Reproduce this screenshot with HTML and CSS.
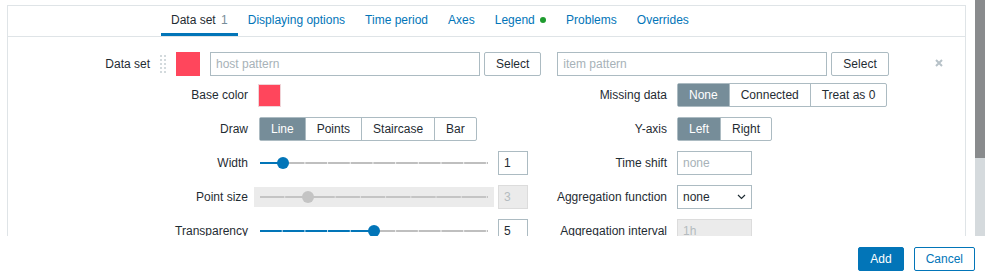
FILE: index.html
```html
<!DOCTYPE html>
<html lang="en">

<head>
    <meta charset="UTF-8">
    <title>Graph widget</title>
    <link rel="stylesheet" href="styles.css">
</head>

<body>
    <div class="dialog">
        <div class="dialog-body">
            <div class="scroll-area">
                <div class="tab-panel">
                    <ul class="tabs">
                        <li class="tab active"><a href="#">Data set <span class="count">1</span></a></li>
                        <li class="tab"><a href="#">Displaying options</a></li>
                        <li class="tab"><a href="#">Time period</a></li>
                        <li class="tab"><a href="#">Axes</a></li>
                        <li class="tab"><a href="#">Legend <span class="dot"></span></a></li>
                        <li class="tab"><a href="#">Problems</a></li>
                        <li class="tab"><a href="#">Overrides</a></li>
                    </ul>

                    <div class="tab-content">
                        <div class="dataset-row">
                            <label class="dataset-label">Data set</label>
                            <span class="drag-handle"></span>
                            <span class="swatch"></span>
                            <input class="text pattern" type="text" placeholder="host pattern">
                            <button class="btn">Select</button>
                            <input class="text pattern item" type="text" placeholder="item pattern">
                            <button class="btn">Select</button>
                            <span class="remove">
                                <svg width="8" height="8" viewBox="0 0 8 8">
                                    <path d="M1 1 L7 7 M7 1 L1 7" stroke="#b7c2c8" stroke-width="2" />
                                </svg>
                            </span>
                        </div>

                        <div class="form-grid">
                            <label class="lbl">Base color</label>
                            <div class="ctl"><span class="swatch small"></span></div>
                            <label class="lbl right">Missing data</label>
                            <div class="ctl">
                                <div class="segmented">
                                    <span class="seg checked">None</span>
                                    <span class="seg">Connected</span>
                                    <span class="seg">Treat as 0</span>
                                </div>
                            </div>

                            <label class="lbl">Draw</label>
                            <div class="ctl">
                                <div class="segmented">
                                    <span class="seg checked">Line</span>
                                    <span class="seg">Points</span>
                                    <span class="seg">Staircase</span>
                                    <span class="seg">Bar</span>
                                </div>
                            </div>
                            <label class="lbl right">Y-axis</label>
                            <div class="ctl">
                                <div class="segmented">
                                    <span class="seg checked">Left</span>
                                    <span class="seg">Right</span>
                                </div>
                            </div>

                            <label class="lbl">Width</label>
                            <div class="ctl">
                                <div class="range">
                                    <div class="track ticks-10" style="--pos: 10%"><span class="thumb"></span></div>
                                </div>
                                <input class="text num" type="text" value="1">
                            </div>
                            <label class="lbl right">Time shift</label>
                            <div class="ctl"><input class="text short" type="text" placeholder="none"></div>

                            <label class="lbl">Point size</label>
                            <div class="ctl">
                                <div class="range disabled">
                                    <div class="track ticks-9" style="--pos: 21%"><span class="thumb"></span></div>
                                </div>
                                <input class="text num" type="text" value="3" disabled>
                            </div>
                            <label class="lbl right">Aggregation function</label>
                            <div class="ctl">
                                <div class="select">
                                    <span>none</span>
                                    <svg width="9" height="6" viewBox="0 0 9 6">
                                        <path d="M1 1 L4.5 4.5 L8 1" fill="none" stroke="#1f2c33" stroke-width="1.2" />
                                    </svg>
                                </div>
                            </div>

                            <label class="lbl">Transparency</label>
                            <div class="ctl">
                                <div class="range">
                                    <div class="track ticks-10" style="--pos: 50%"><span class="thumb"></span></div>
                                </div>
                                <input class="text num" type="text" value="5">
                            </div>
                            <label class="lbl right">Aggregation interval</label>
                            <div class="ctl"><input class="text short" type="text" value="1h" disabled></div>
                        </div>
                    </div>
                </div>
            </div>
            <div class="scrollbar"><div class="scroll-thumb"></div></div>
        </div>

        <div class="dialog-footer">
            <button class="btn primary">Add</button>
            <button class="btn alt">Cancel</button>
        </div>
    </div>
</body>

</html>
```

FILE: styles.css
```css
body {
    margin: 0;
    background: #fff;
    color: #1f2c33;
    font-family: "Liberation Sans", Arial, sans-serif;
    font-size: 12px;
}

.dialog {
    width: 985px;
    height: 277px;
    display: flex;
    flex-direction: column;
}

.dialog-body {
    height: 236px;
    display: flex;
    overflow: hidden;
}

.scroll-area {
    flex: 1;
    overflow: hidden;
    padding: 5px 9px 0 7px;
}

.scrollbar {
    width: 10px;
    background: #d5dadd;
}

.scroll-thumb {
    height: 158px;
    background: #898b8d;
}

/* tabs */
.tab-panel {
    border: 1px solid #dfe4e7;
    height: 400px;
}

.tabs {
    list-style: none;
    margin: 0;
    padding: 0 0 0 153px;
    display: flex;
    border-bottom: 1px solid #dfe4e7;
}

.tab a {
    display: block;
    padding: 7px 10px 5px;
    line-height: 15px;
    border-bottom: 3px solid transparent;
    color: #0275b8;
    text-decoration: none;
}

.tab.active a {
    color: #1f2c33;
    border-bottom-color: #0275b8;
}

.count {
    color: #768d99;
    margin-left: 2px;
}

.dot {
    display: inline-block;
    width: 6px;
    height: 6px;
    border-radius: 50%;
    background: #1e9b2e;
    margin-left: 2px;
    vertical-align: 1px;
}

.tab-content {
    padding-top: 15px;
}

/* data set row */
.dataset-row {
    display: flex;
    align-items: center;
    height: 24px;
}

.dataset-label {
    width: 142px;
    text-align: right;
    margin-right: 10px;
}

.drag-handle {
    width: 6px;
    height: 20px;
    margin-right: 10px;
    background-image: radial-gradient(circle, #d3dadd 1px, transparent 1.2px);
    background-size: 4px 4px;
    background-position: -1px 0;
}

.swatch {
    width: 24px;
    height: 24px;
    background: #ff465c;
    margin-right: 10px;
    box-sizing: border-box;
}

.swatch.small {
    width: 23px;
    height: 23px;
    margin: 0 0 0 -1px;
    border: 1px solid #f0d4d8;
}

.text {
    height: 24px;
    box-sizing: border-box;
    border: 1px solid #acbbc2;
    padding: 0 5px;
    font-family: inherit;
    font-size: 12px;
    color: #1f2c33;
    background: #fff;
    margin: 0;
    outline: none;
}

.text::placeholder {
    color: #a7b2b8;
}

.text:disabled {
    background: #ebebeb;
    border-color: #dcdcdc;
    color: #b4bbbf;
}

.pattern {
    width: 270px;
    margin-right: 4px;
}

.pattern.item {
    margin-left: 16px;
}

.btn {
    height: 24px;
    padding: 0 11px;
    border: 1px solid #acbbc2;
    border-radius: 2px;
    background: #fff;
    color: #1f2c33;
    font-family: inherit;
    font-size: 12px;
    line-height: 22px;
    cursor: pointer;
}

.remove {
    display: flex;
    margin-left: 46px;
    margin-top: -2px;
}

/* grid of fields */
.form-grid {
    display: grid;
    grid-template-columns: 251px 269px 149px 1fr;
    grid-auto-rows: 24px;
    row-gap: 10px;
    margin-top: 7px;
    align-items: center;
}

.lbl {
    text-align: right;
    padding-right: 11px;
    white-space: nowrap;
}

.lbl.right {
    padding-right: 10px;
}

.ctl {
    display: flex;
    align-items: center;
}

.segmented {
    display: flex;
    border: 1px solid #acbbc2;
    border-radius: 2px;
    height: 22px;
}

.seg {
    padding: 0 11px;
    line-height: 22px;
    border-left: 1px solid #acbbc2;
}

.seg:first-child {
    border-left: none;
}

.seg.checked {
    background: #768d99;
    color: #fff;
}

/* range sliders */
.range {
    width: 228px;
    height: 20px;
    padding: 0 6px;
    margin: 0 4px 0 -5px;
    display: flex;
    align-items: center;
}

.range.disabled {
    background: #ebebeb;
}

.track {
    position: relative;
    width: 100%;
    height: 2px;
    background: linear-gradient(to right, #0275b8 var(--pos), #bfbfbf var(--pos));
}

.track::after {
    content: "";
    position: absolute;
    left: 0;
    top: 0;
    right: 0;
    bottom: 0;
    background-image: linear-gradient(to right, transparent calc(100% - 1px), rgba(255, 255, 255, 0.8) calc(100% - 1px));
    background-repeat: repeat-x;
}

.ticks-10::after {
    background-size: 10% 100%;
    right: 1px;
}

.ticks-9::after {
    background-size: 11.111% 100%;
    right: 1px;
}

.range.disabled .track {
    background: #c4c4c4;
}

.range.disabled .track::after {
    background-image: linear-gradient(to right, transparent calc(100% - 1px), #e2e2e2 calc(100% - 1px));
}

.thumb {
    position: absolute;
    left: var(--pos);
    top: 50%;
    width: 12px;
    height: 12px;
    margin: -6px 0 0 -6px;
    border-radius: 50%;
    background: #0275b8;
    z-index: 1;
}

.range.disabled .thumb {
    background: #c4c4c4;
}

.num {
    width: 30px;
}

.short {
    width: 75px;
}

.select {
    width: 75px;
    height: 24px;
    box-sizing: border-box;
    border: 1px solid #acbbc2;
    padding: 0 5px;
    display: flex;
    align-items: center;
    justify-content: space-between;
}

/* footer */
.dialog-footer {
    display: flex;
    justify-content: flex-end;
    gap: 10px;
    padding: 11px 10px 0 0;
}

.btn.primary {
    background: #0275b8;
    border-color: #0275b8;
    color: #fff;
}

.btn.alt {
    border-color: #0275b8;
    color: #0275b8;
}
```
